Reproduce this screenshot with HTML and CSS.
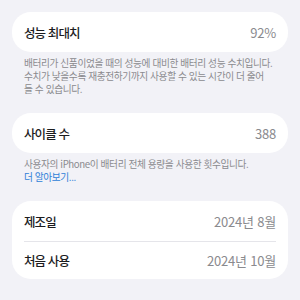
FILE: index.html
```html
<!DOCTYPE html>
<html lang="ko">
<head>
    <meta charset="UTF-8">
    <meta name="viewport" content="width=device-width, initial-scale=1.0">
    <title>배터리 성능</title>
    <link rel="stylesheet" href="styles.css">
</head>
<body>

<div class="page">
    <div class="group">
        <div class="row">
            <span class="label">성능 최대치</span>
            <span class="value">92%</span>
        </div>
    </div>
    <p class="footer">배터리가 신품이었을 때의 성능에 대비한 배터리 성능 수치입니다. 수치가 낮을수록 재충전하기까지 사용할 수 있는 시간이 더 줄어<br>들 수 있습니다.</p>

    <div class="group">
        <div class="row">
            <span class="label">사이클 수</span>
            <span class="value">388</span>
        </div>
    </div>
    <p class="footer">사용자의 iPhone이 배터리 전체 용량을 사용한 횟수입니다.<br><a href="#">더 알아보기...</a></p>

    <div class="group">
        <div class="row">
            <span class="label">제조일</span>
            <span class="value">2024년 8월</span>
        </div>
        <div class="row">
            <span class="label">처음 사용</span>
            <span class="value">2024년 10월</span>
        </div>
    </div>
</div>

</body>
</html>
```

FILE: styles.css
```css
* {
    box-sizing: border-box;
    margin: 0;
    padding: 0;
}
body {
    font-family: 'Noto Sans CJK KR', 'Noto Sans', sans-serif;
    background-color: #f2f2f7;
    color: #1c1c1e;
}
.page {
    padding: 12px 12px 0;
    display: flex;
    flex-direction: column;
}
.group {
    background-color: #fff;
    border-radius: 19px;
    padding: 0 12px;
}
.row {
    display: flex;
    justify-content: space-between;
    align-items: center;
    height: 40px;
}
.row + .row {
    height: 38px;
    border-top: 1px solid #e5e5ea;
}
.label {
    font-size: 12.5px;
    font-weight: 500;
    letter-spacing: -0.9px;
}
.value {
    font-size: 13px;
    letter-spacing: -0.2px;
    color: #8a8a8e;
}
.footer {
    font-size: 9.7px;
    line-height: 13px;
    letter-spacing: -0.4px;
    color: #8a8a8e;
    padding: 5px 12px 0;
    margin-bottom: 17px;
}
.footer a {
    color: #2f7fd8;
    text-decoration: none;
}
```
